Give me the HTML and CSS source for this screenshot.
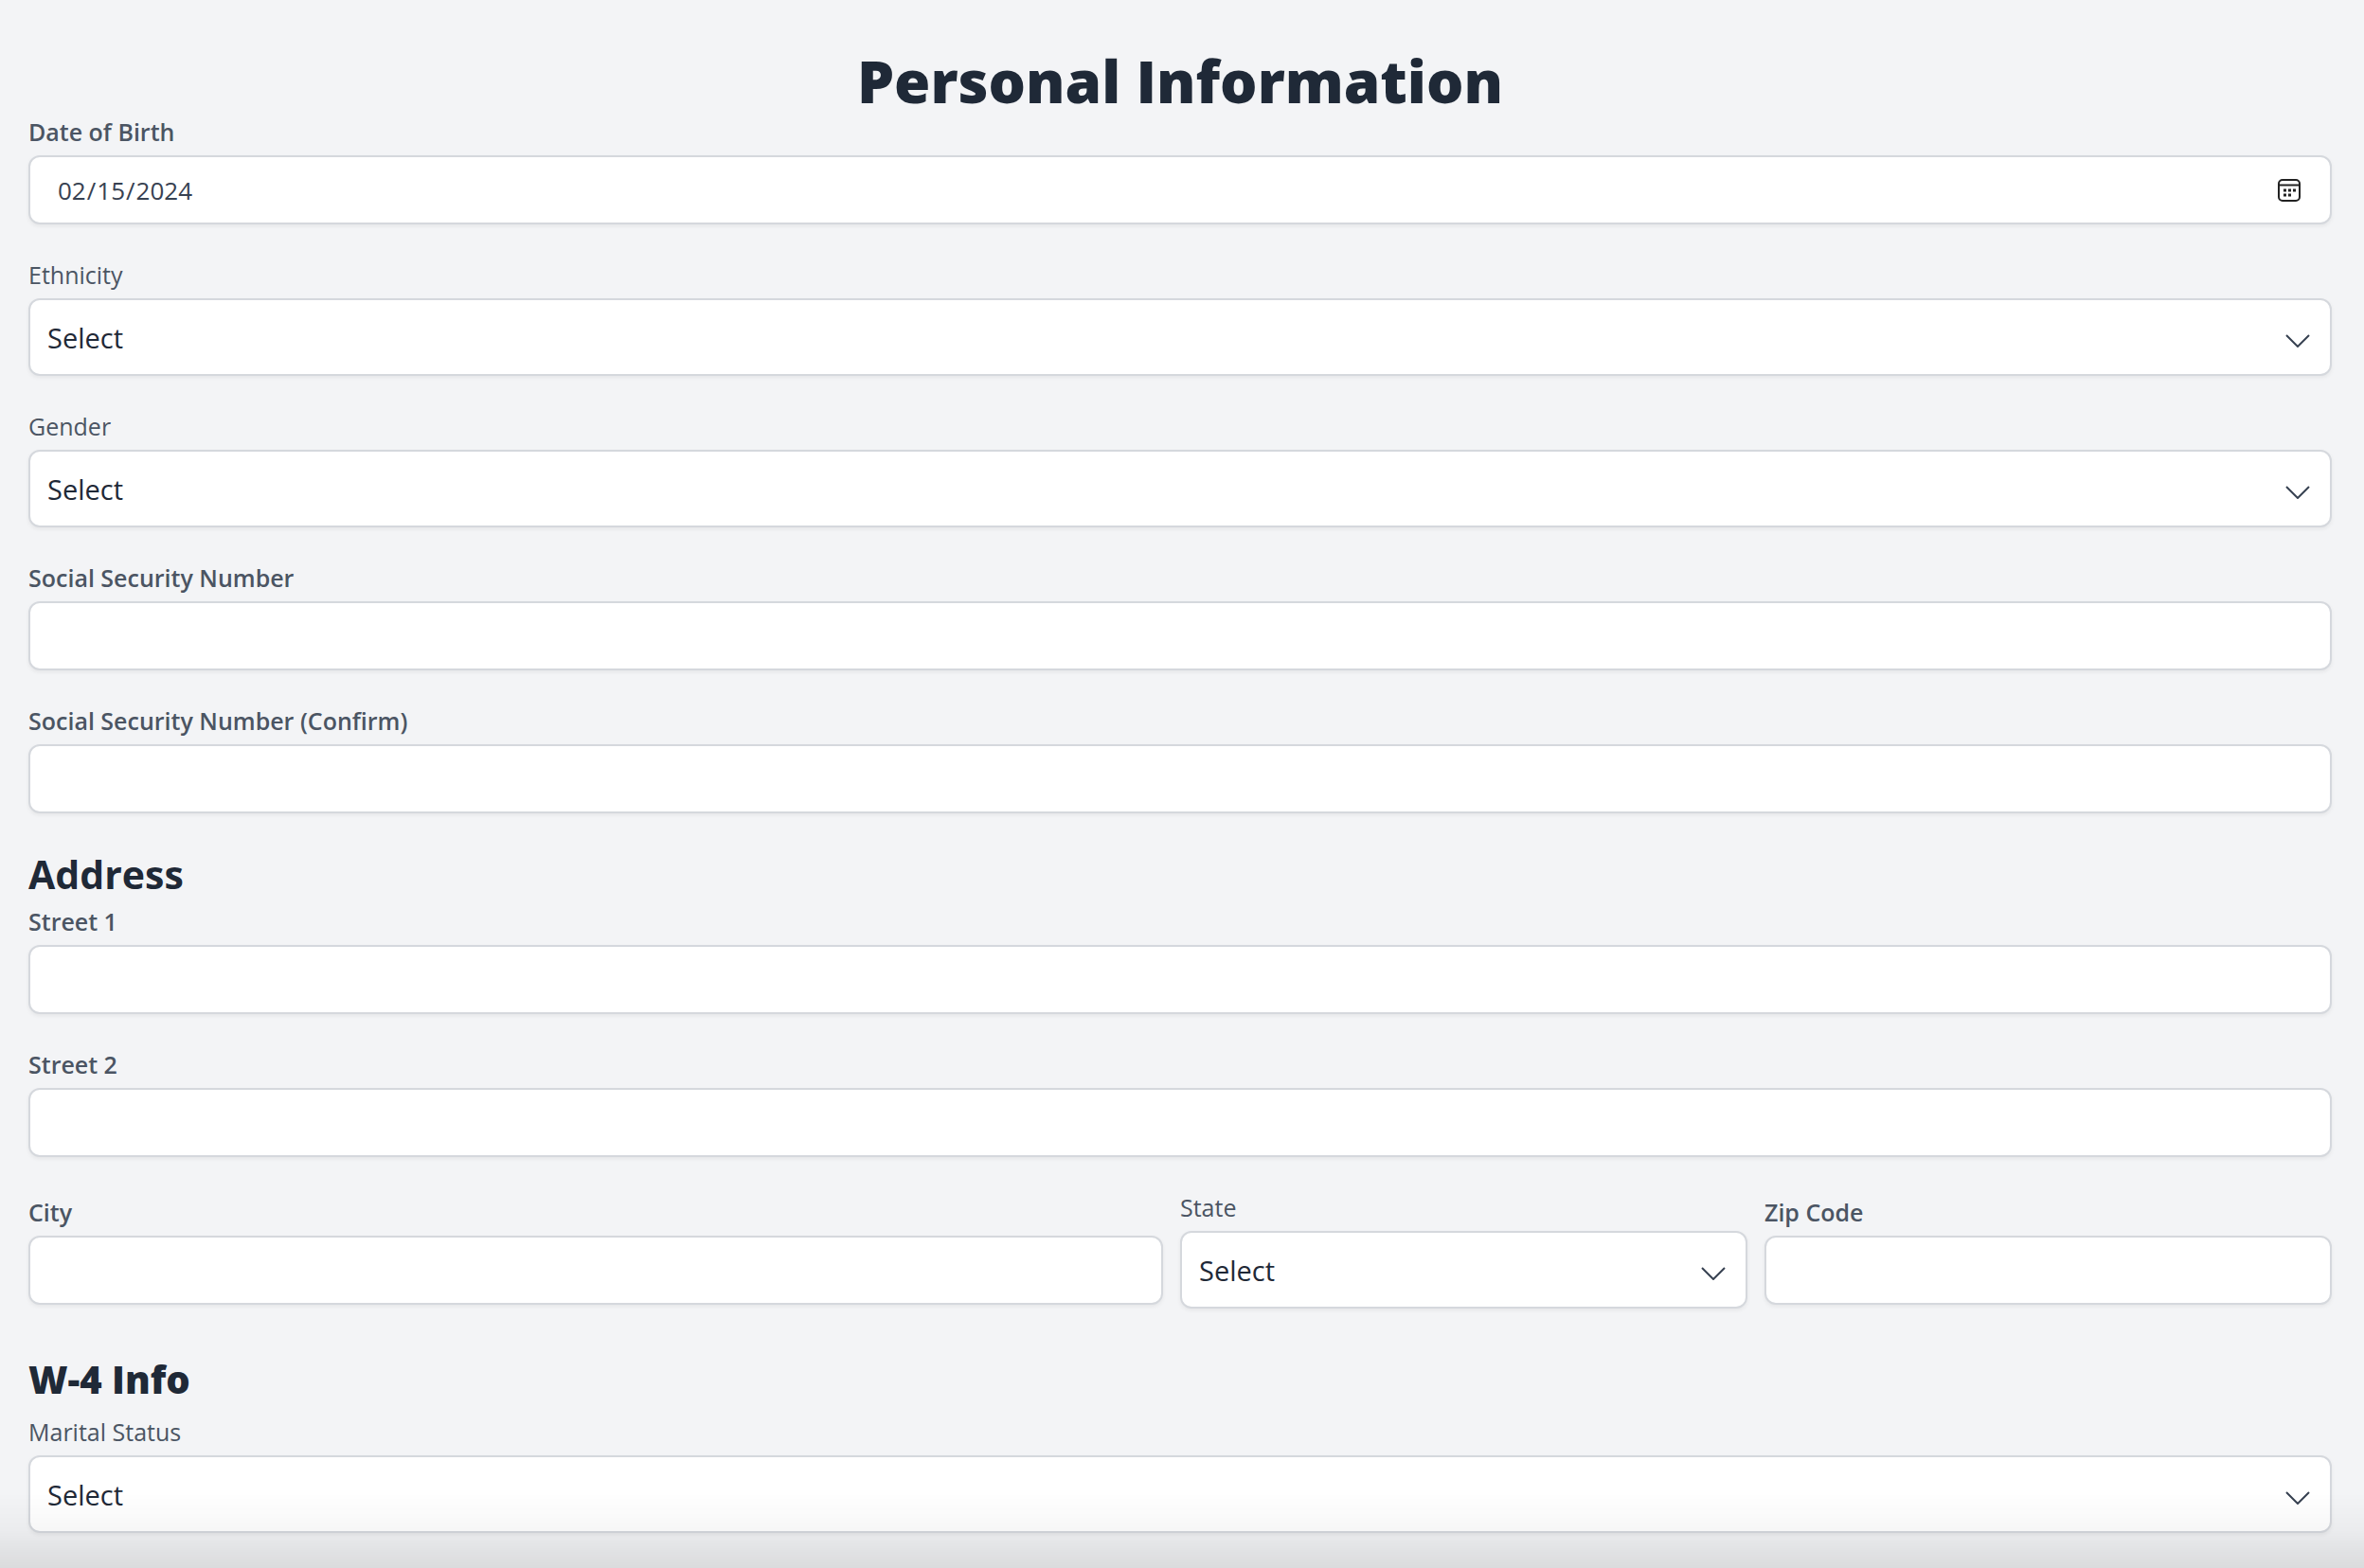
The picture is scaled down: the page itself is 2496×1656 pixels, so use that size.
FILE: index.html
```html
<!DOCTYPE html>
<html lang="en-US">
<head>
    <meta charset="utf-8">
    <meta name="viewport" content="width=device-width, initial-scale=1">
    <title>Personal Information</title>
    <link rel="stylesheet" href="styles.css">
</head>

<body>

    <form class="page">

        <h1 class="title">Personal Information</h1>

        <div class="field">
            <label class="label strong" for="dob">Date of Birth</label>
            <div class="control">
                <input class="box date" id="dob" type="date" value="2024-02-15">
                <svg class="calendar" viewBox="0 0 24 24" aria-hidden="true">
                    <rect x="1" y="1" width="22" height="22" rx="4" />
                    <path d="M1 6.5h22" />
                    <path class="dots" d="M6 10.5h3v3H6zM11 10.5h3v3h-3zM16 10.5h3v3h-3zM6 15.5h3v3H6zM11 15.5h3v3h-3z" />
                </svg>
            </div>
        </div>

        <div class="field">
            <label class="label" for="ethnicity">Ethnicity</label>
            <div class="control">
                <select class="box select" id="ethnicity"><option>Select</option></select>
                <svg class="chevron" viewBox="0 0 26 14" aria-hidden="true"><path d="M1 1l12 12L25 1" /></svg>
            </div>
        </div>

        <div class="field">
            <label class="label" for="gender">Gender</label>
            <div class="control">
                <select class="box select" id="gender"><option>Select</option></select>
                <svg class="chevron" viewBox="0 0 26 14" aria-hidden="true"><path d="M1 1l12 12L25 1" /></svg>
            </div>
        </div>

        <div class="field">
            <label class="label strong" for="ssn">Social Security Number</label>
            <input class="box" id="ssn" type="text">
        </div>

        <div class="field">
            <label class="label strong" for="ssn-confirm">Social Security Number (Confirm)</label>
            <input class="box" id="ssn-confirm" type="text">
        </div>

        <h2 class="section">Address</h2>

        <div class="field">
            <label class="label strong" for="street1">Street 1</label>
            <input class="box" id="street1" type="text">
        </div>

        <div class="field">
            <label class="label strong" for="street2">Street 2</label>
            <input class="box" id="street2" type="text">
        </div>

        <div class="row">
            <div class="field">
                <label class="label strong" for="city">City</label>
                <input class="box" id="city" type="text">
            </div>
            <div class="field">
                <label class="label" for="state">State</label>
                <div class="control">
                    <select class="box select" id="state"><option>Select</option></select>
                    <svg class="chevron" viewBox="0 0 26 14" aria-hidden="true"><path d="M1 1l12 12L25 1" /></svg>
                </div>
            </div>
            <div class="field">
                <label class="label strong" for="zip">Zip Code</label>
                <input class="box" id="zip" type="text">
            </div>
        </div>

        <h2 class="subsection">W-4 Info</h2>

        <div class="field">
            <label class="label" for="marital">Marital Status</label>
            <div class="control">
                <select class="box select" id="marital"><option>Select</option></select>
                <svg class="chevron" viewBox="0 0 26 14" aria-hidden="true"><path d="M1 1l12 12L25 1" /></svg>
            </div>
        </div>

    </form>

    <div class="fade"></div>

</body>

</html>
```

FILE: styles.css
```css
* {
    box-sizing: border-box;
}
body {
    margin: 0;
    background-color: #f3f4f6;
    color: #1f2937;
    font-family: "Open Sans", "Noto Sans", sans-serif;
}
.page {
    padding: 50px 34px 0 30px;
}
.title {
    margin: 0;
    font-size: 62px;
    font-weight: 800;
    line-height: 70px;
    text-align: center;
}
.section {
    margin: 0;
    font-size: 41px;
    font-weight: 700;
    line-height: 61px;
}
.subsection {
    margin: 15px 0 10px;
    font-size: 40px;
    font-weight: 800;
    line-height: 52px;
}
.field {
    margin-bottom: 34px;
}
.label {
    display: block;
    margin-bottom: 6px;
    color: #4b5563;
    font-size: 25px;
    line-height: 38px;
}
.strong {
    font-weight: 600;
}
.control {
    position: relative;
}
.box {
    display: block;
    width: 100%;
    height: 73px;
    padding: 0 28px;
    border: 2px solid #d5d8dd;
    border-radius: 12px;
    background-color: #fff;
    box-shadow: 0 2px 4px rgba(0, 0, 0, .06);
    color: #374151;
    font-family: inherit;
    font-size: 26px;
}
.select {
    height: 82px;
    padding: 0 18px;
    color: #1f2937;
    font-size: 29px;
    appearance: none;
}
.date::-webkit-calendar-picker-indicator {
    opacity: 0;
}
.calendar,
.chevron {
    position: absolute;
    fill: none;
    pointer-events: none;
}
.calendar {
    top: 25px;
    right: 33px;
    width: 24px;
    height: 24px;
    stroke: #222;
    stroke-width: 2;
}
.calendar .dots {
    fill: #222;
    stroke: none;
}
.chevron {
    top: 38px;
    right: 23px;
    width: 26px;
    height: 14px;
    stroke: #374151;
    stroke-width: 2;
}
.row {
    display: grid;
    grid-template-columns: 2fr 1fr 1fr;
    gap: 18px;
    align-items: center;
}

/* shade along the bottom of the window */
.fade {
    position: fixed;
    bottom: 0;
    left: 0;
    right: 0;
    height: 80px;
    background: linear-gradient(rgba(0, 0, 0, 0), rgba(0, 0, 0, .03) 50%, rgba(0, 0, 0, .1));
    pointer-events: none;
}
```
